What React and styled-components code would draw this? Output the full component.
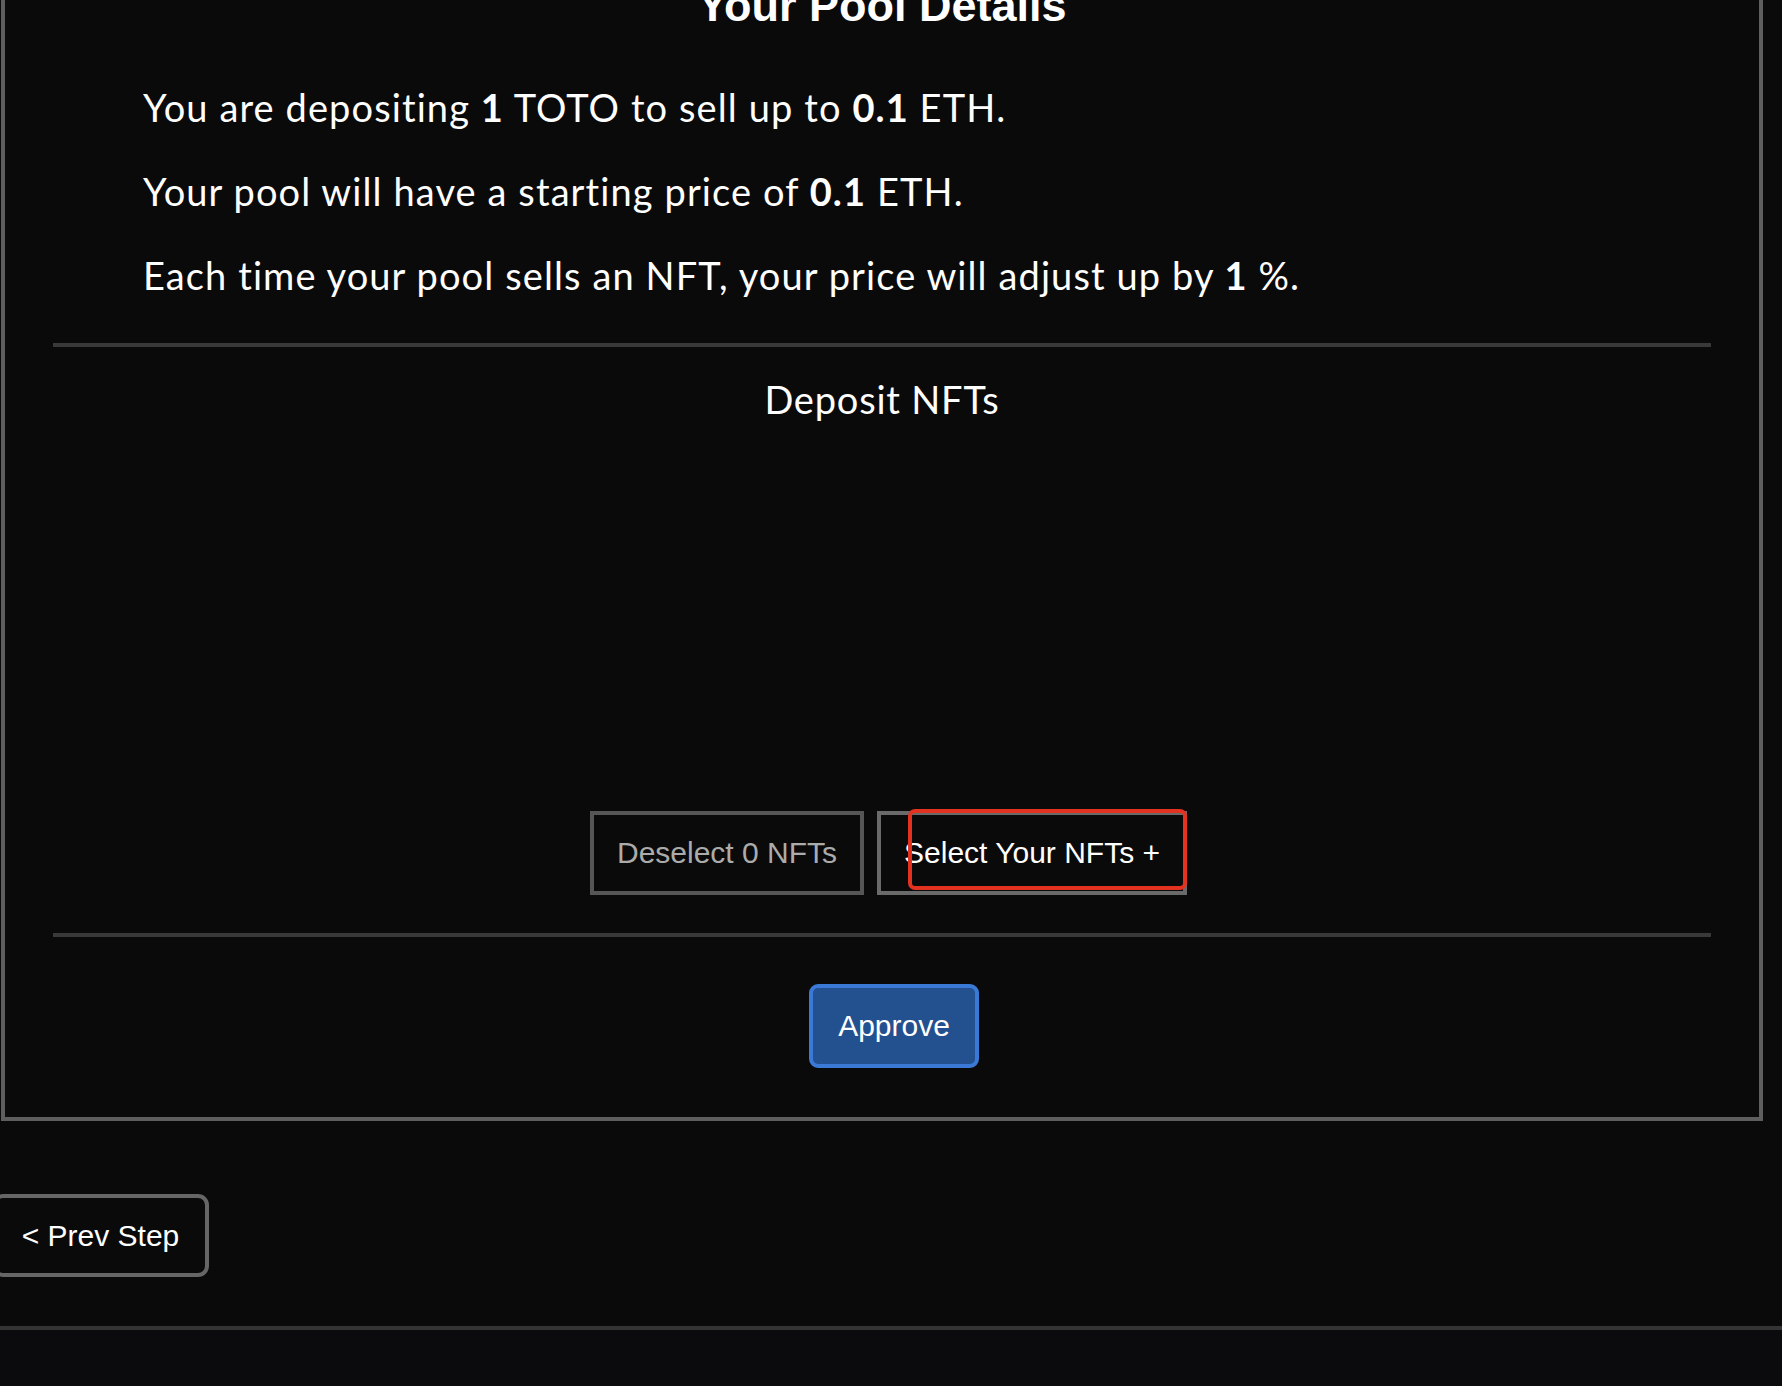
import React from "react";
import styled, { createGlobalStyle } from "styled-components";

const GlobalStyle = createGlobalStyle`
  html, body {
    margin: 0;
    padding: 0;
    background: #0a0a0a;
    color: #fff;
    overflow: hidden;
  }
  body {
    font-family: "Liberation Sans", Arial, sans-serif;
  }
  * {
    box-sizing: border-box;
  }
`;

const Page = styled.div`
  min-height: 1386px;
  display: flex;
  flex-direction: column;
  overflow: hidden;
`;

const Panel = styled.section`
  margin: -23px 0 0 1px;
  width: 1762px;
  border: 4px solid #5e5e5e;
  padding: 0 48px 49px;
  display: flex;
  flex-direction: column;
`;

const Title = styled.h2`
  margin: 0;
  font-family: "Liberation Sans", Arial, sans-serif;
  font-weight: 700;
  font-size: 45px;
  line-height: 50px;
  text-align: center;
`;

const Details = styled.div`
  margin-top: 51px;
  padding-left: 90px;
  font-family: Lato, "Open Sans", sans-serif;
  font-size: 38px;
  line-height: 50px;
  letter-spacing: 1.1px;

  p {
    margin: 0 0 34px;
  }
  p:last-child {
    margin-bottom: 0;
  }
  b {
    font-weight: 700;
  }
`;

const Divider = styled.hr`
  margin: ${(p) => p.$top}px 0 0;
  border: 0;
  height: 4px;
  background: #393939;
`;

const SectionHeading = styled.h3`
  margin: 30px 0 0;
  font-family: Lato, "Open Sans", sans-serif;
  font-weight: 400;
  font-size: 38px;
  line-height: 44px;
  letter-spacing: 0.8px;
  text-align: center;
`;

const NftGrid = styled.div`
  min-height: 390px;
`;

const ButtonRow = styled.div`
  display: flex;
  justify-content: center;
  gap: 13px;
  padding-left: ${(p) => p.$shift || 0}px;
  margin-top: ${(p) => p.$top || 0}px;
`;

const OutlineButton = styled.button`
  position: relative;
  height: 84px;
  padding: 0 23px;
  background: transparent;
  border: 4px solid ${(p) => (p.$muted ? "#565656" : "#6a6a6a")};
  border-radius: 0;
  color: ${(p) => (p.$muted ? "#ababab" : "#ffffff")};
  font-family: "Liberation Sans", Arial, sans-serif;
  font-size: 30px;
  cursor: pointer;
`;

const Highlight = styled.span`
  position: absolute;
  left: 27px;
  top: -6px;
  width: 279px;
  height: 81px;
  border: 4px solid #e3321f;
  border-radius: 7px;
  pointer-events: none;
`;

const ApproveButton = styled.button`
  width: 170px;
  height: 84px;
  background: #23508f;
  border: 4px solid #3a79d6;
  border-radius: 9px;
  color: #fff;
  font-family: "Liberation Sans", Arial, sans-serif;
  font-size: 30px;
  cursor: pointer;
`;

const StepBar = styled.div`
  margin-top: 73px;
  padding-bottom: 49px;
`;

const PrevButton = styled.button`
  margin-left: -8px;
  width: 217px;
  height: 83px;
  background: transparent;
  border: 4px solid #666;
  border-radius: 11px;
  color: #fff;
  font-family: "Liberation Sans", Arial, sans-serif;
  font-size: 30px;
  cursor: pointer;
`;

const Footer = styled.footer`
  flex: 1;
  border-top: 4px solid #343434;
  background: #0b0b0d;
`;

export default function App() {
  return (
    <>
      <GlobalStyle />
      <Page>
        <Panel>
          <Title>Your Pool Details</Title>
          <Details>
            <p>
              You are depositing <b>1</b> TOTO to sell up to <b>0.1</b> ETH.
            </p>
            <p>
              Your pool will have a starting price of <b>0.1</b> ETH.
            </p>
            <p>
              Each time your pool sells an NFT, your price will adjust up by{" "}
              <b>1</b> %.
            </p>
          </Details>
          <Divider $top={43} />
          <SectionHeading>Deposit NFTs</SectionHeading>
          <NftGrid />
          <ButtonRow $shift={13}>
            <OutlineButton $muted>Deselect 0 NFTs</OutlineButton>
            <OutlineButton>
              Select Your NFTs +
              <Highlight />
            </OutlineButton>
          </ButtonRow>
          <Divider $top={38} />
          <ButtonRow $shift={24} $top={47}>
            <ApproveButton>Approve</ApproveButton>
          </ButtonRow>
        </Panel>
        <StepBar>
          <PrevButton>&lt; Prev Step</PrevButton>
        </StepBar>
        <Footer />
      </Page>
    </>
  );
}
